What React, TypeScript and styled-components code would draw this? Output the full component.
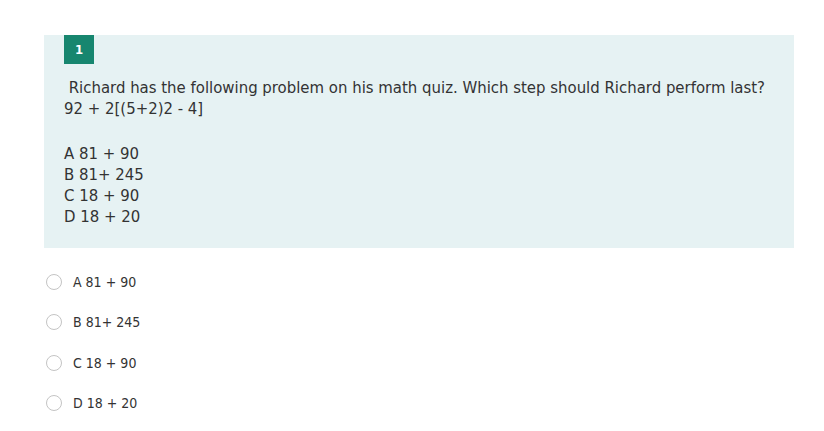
import styled, { createGlobalStyle } from 'styled-components'

const GlobalStyle = createGlobalStyle`
	html, body {
		margin: 0;
		padding: 0;
		background: #fff;
	}
	body {
		font-family: 'DejaVu Sans Condensed', 'DejaVu Sans', sans-serif;
		color: #333;
	}
`

const options = ['A 81 + 90', 'B 81+ 245', 'C 18 + 90', 'D 18 + 20']

export default function App() {
	return (
		<>
			<GlobalStyle />
			<Page>
				<QuestionPanel>
					<Badge>1</Badge>
					<Prompt>
						<Line>&nbsp;Richard has the following problem on his math quiz. Which step should Richard perform last?</Line>
						<Line>92 + 2[(5+2)2 - 4]</Line>
						<Spacer />
						{options.map((o) => (
							<Line key={o}>{o}</Line>
						))}
					</Prompt>
				</QuestionPanel>

				<AnswerList>
					{options.map((o) => (
						<Answer key={o}>
							<Radio type="radio" name="answer" />
							<AnswerText>{o}</AnswerText>
						</Answer>
					))}
				</AnswerList>
			</Page>
		</>
	)
}

const Page = styled.div`
	padding: 35px 30px 0 44px;
	width: 750px;
`

const QuestionPanel = styled.section`
	background-color: #e6f2f3;
	padding: 0 20px;
	height: 213px;
	box-sizing: border-box;
`

const Badge = styled.div`
	width: 30px;
	height: 29px;
	background-color: #17866f;
	color: #fff;
	font-size: 13px;
	font-weight: bold;
	display: flex;
	align-items: center;
	justify-content: center;
`

const Prompt = styled.div`
	margin-top: 13px;
	font-size: 16.6px;
	line-height: 21px;
`

const Line = styled.div`
	white-space: pre;
`

const Spacer = styled.div`
	height: 24px;
`

const AnswerList = styled.div`
	display: flex;
	flex-direction: column;
	gap: 20.3px;
	padding-top: 24px;
`

const Answer = styled.label`
	display: flex;
	align-items: center;
	gap: 11px;
	height: 20px;
	font-size: 14px;
`

const Radio = styled.input`
	appearance: none;
	margin: 0 0 0 2px;
	width: 16px;
	height: 16px;
	border-radius: 50%;
	border: 1px solid #c4c4c4;
	background: #fff;
	box-sizing: border-box;
`

const AnswerText = styled.span`
	color: #333;
`
